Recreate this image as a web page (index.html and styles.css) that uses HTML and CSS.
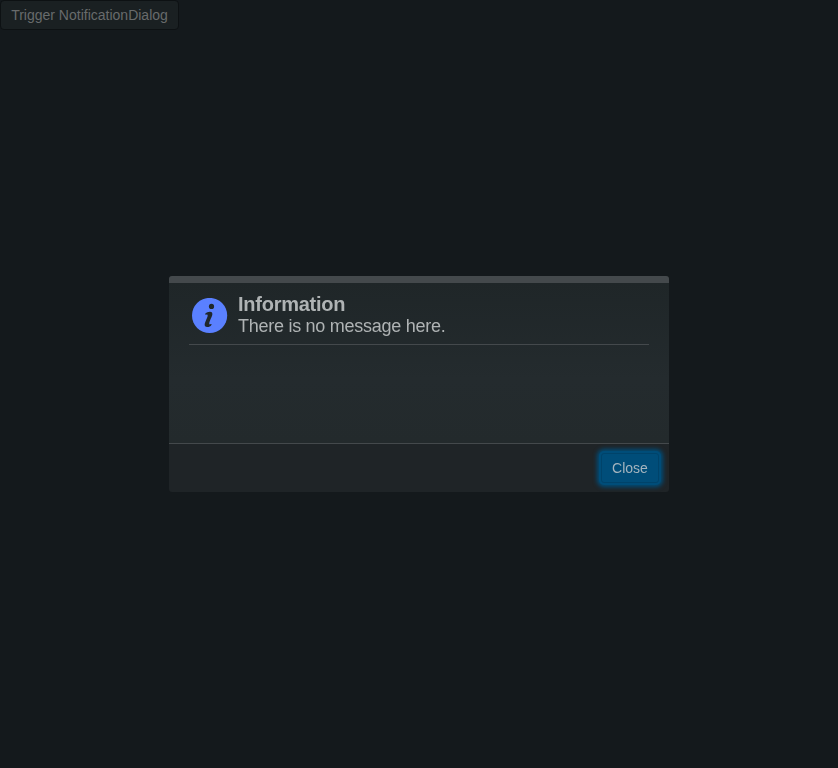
FILE: index.html
```html
<!DOCTYPE html>
<html lang="en">
<head>
<meta charset="utf-8">
<title>Notification dialog</title>
<link rel="stylesheet" href="styles.css">
</head>
<body>
<button class="trigger">Trigger NotificationDialog</button>
<div class="overlay">
  <section class="dialog" role="dialog" aria-labelledby="title">
    <div class="dialog-bar"></div>
    <div class="dialog-body">
      <header class="heading">
        <svg class="icon" viewBox="0 0 36 36" aria-hidden="true">
          <circle cx="17.6" cy="17.5" r="17.6" fill="#5a80ff"/>
          <circle cx="19.5" cy="8.4" r="2.6" fill="#20272a"/>
          <path d="M13.4 15.6c1.3-1.3 3-2 4.6-1.9 2.1.1 2.8 1.6 2.2 3.6-.8 2.7-2.4 5-2.9 7.5-.3 1.4.2 2 1.5 1.3.6-.3 1 .2.6.8-.8 1.4-2.4 2.2-4.1 2.2-2.3 0-3-1.5-2.5-3.6.6-2.6 2.2-4.9 2.8-7.3.3-1.3-.2-1.9-1.5-1.5-.8.3-1.2-.5-.7-1.1z" fill="#20272a"/>
        </svg>
        <div class="copy">
          <h1 class="title" id="title">Information</h1>
          <p class="message">There is no message here.</p>
        </div>
      </header>
    </div>
    <footer class="dialog-footer">
      <button class="close">Close</button>
    </footer>
  </section>
</div>
</body>
</html>
```
FILE: styles.css
```css
* {
  box-sizing: border-box;
}

body {
  margin: 0;
  height: 768px;
  overflow: hidden;
  background: #14191c;
  color: #afb3b4;
  font-family: "Liberation Sans", Arial, sans-serif;
}

button {
  font: 14px/18px "Liberation Sans", Arial, sans-serif;
}

.trigger {
  display: block;
  width: 179px;
  height: 30px;
  padding: 0;
  border: 1px solid #0d1113;
  border-radius: 4px;
  background: #1a2022;
  color: #686b6c;
}

.overlay {
  position: fixed;
  inset: 0;
  display: flex;
  align-items: center;
  justify-content: center;
}

.dialog {
  display: flex;
  flex-direction: column;
  width: 500px;
  height: 216px;
  overflow: hidden;
  border-radius: 3px;
  background: #1f2427;
}

.dialog-bar {
  height: 7px;
  background: #44494c;
}

.dialog-body {
  flex: 1;
  padding: 10px 20px;
  background: linear-gradient(#1f2628, #242b2e 60%, #232a2c);
}

.heading {
  display: flex;
  height: 52px;
  padding-left: 2px;
  border-bottom: 1px solid #44494c;
}

.icon {
  width: 36px;
  height: 36px;
  margin: 5px 11px 0 1px;
}

.title {
  margin: 0;
  font-size: 20px;
  line-height: 22px;
  letter-spacing: -0.25px;
}

.message {
  margin: 0;
  font-size: 18px;
  line-height: 22px;
  letter-spacing: -0.27px;
}

.copy {
  margin-left: -1px;
}

.dialog-footer {
  display: flex;
  justify-content: flex-end;
  height: 49px;
  padding: 9px 10px;
  border-top: 1px solid #44494c;
}

.close {
  width: 58px;
  height: 30px;
  padding: 0;
  border: 1px solid #00436a;
  border-radius: 3px;
  background: #004d79;
  color: #a4b4be;
  box-shadow: 0 0 0 2px #004d79, 0 0 4px 4px #004d79;
}
```
